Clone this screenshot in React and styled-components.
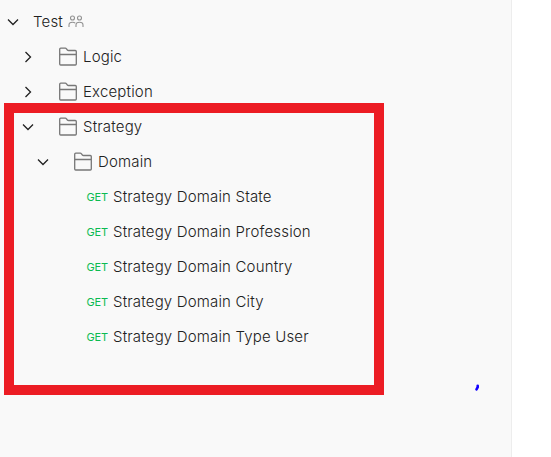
import React from "react";
import styled, { createGlobalStyle } from "styled-components";

const Global = createGlobalStyle`
  body { margin: 0; background: #fff; font-family: Inter, sans-serif; }
`;
const Page = styled.div`
  position: relative;
  height: 457px;
  width: 551px;
  overflow: hidden;
`;
const Sidebar = styled.nav`
  box-sizing: border-box;
  width: 512px;
  height: 100%;
  padding-top: 4px;
  background: #f9f9f9;
  border-right: 1px solid #ededed;
`;
const Row = styled.div`
  display: flex;
  align-items: center;
  height: 35px;
  padding-left: ${(p) => p.$indent}px;
  color: #212121;
  font-size: 15px;
  font-weight: 300;
  line-height: 20px;
  white-space: nowrap;
`;
const Chevron = styled.svg`
  width: 12px;
  height: 12px;
  margin-right: ${(p) => p.$gap}px;
  fill: none;
  stroke: #212121;
  stroke-width: 1.3;
`;
const Folder = styled.svg`
  width: 18px;
  height: 19px;
  margin-right: 6px;
  fill: none;
  stroke: #777;
  stroke-width: 1.3;
  stroke-linejoin: round;
`;
const Team = styled.svg`
  width: 16px;
  height: 13px;
  margin-left: 4.6px;
  fill: none;
  stroke: #929292;
  stroke-width: 1.1;
`;
const Method = styled.span`
  width: 26.5px;
  margin-left: 0.5px;
  padding-top: 1px;
  color: #0cbb52;
  font-size: 11px;
  font-weight: 400;
  letter-spacing: -0.2px;
`;
const Label = styled.span`
  letter-spacing: 0.17px;
`;
const Highlight = styled.div`
  position: absolute;
  box-sizing: border-box;
  left: 4px;
  top: 103px;
  width: 380px;
  height: 292px;
  border: 10px solid #ec1c24;
`;
const PenMark = styled.svg`
  position: absolute;
  left: 474px;
  top: 383px;
`;

const Arrow = ({ open, gap }) => (
  <Chevron $gap={gap} viewBox="0 0 12 12">
    <path d={open ? "M1 3.5L6 8.5L11 3.5" : "M3.5 1L8.5 6L3.5 11"} />
  </Chevron>
);
const FolderIcon = () => (
  <Folder viewBox="0 0 18 19">
    <path d="M.7 17V2.2Q.7 1.2 1.7 1.2H6.3Q7 1.2 7.5 1.8L8.4 3Q8.8 3.5 9.5 3.5H16.3Q17.3 3.5 17.3 4.5V17Q17.3 18 16.3 18H1.7Q.7 18 .7 17ZM.7 7.5H17.3" />
  </Folder>
);

const folders = [
  { name: "Logic", indent: 22, gap: 25 },
  { name: "Exception", indent: 22, gap: 25 },
  { name: "Strategy", indent: 22, gap: 25, open: true },
  { name: "Domain", indent: 37, gap: 25, open: true },
];
const requests = ["State", "Profession", "Country", "City", "Type User"];

export default function App() {
  return (
    <Page>
      <Global />
      <Sidebar>
        <Row $indent={7}>
          <Arrow open gap={14} />
          <Label>Test</Label>
          <Team viewBox="0 0 16 13">
            <circle cx="4.5" cy="3" r="2" />
            <circle cx="11.5" cy="3" r="2" />
            <path d="M1 12V10Q1 7.3 4.5 7.3Q6.3 7.3 7.2 8.2M8 12V10Q8 7.3 11.5 7.3T15 10V12" />
          </Team>
        </Row>
        {folders.map((f) => (
          <Row key={f.name} $indent={f.indent}>
            <Arrow open={f.open} gap={f.gap} />
            <FolderIcon />
            <Label>{f.name}</Label>
          </Row>
        ))}
        {requests.map((name) => (
          <Row key={name} $indent={86}>
            <Method>GET</Method>
            <Label>Strategy Domain {name}</Label>
          </Row>
        ))}
      </Sidebar>
      <Highlight />
      <PenMark width="7" height="9" viewBox="0 0 7 9">
        <path d="M3.7 2.8V4.2L2.5 6.3" fill="none" stroke="#1200ff" strokeWidth="2.6" strokeLinecap="round" />
      </PenMark>
    </Page>
  );
}
